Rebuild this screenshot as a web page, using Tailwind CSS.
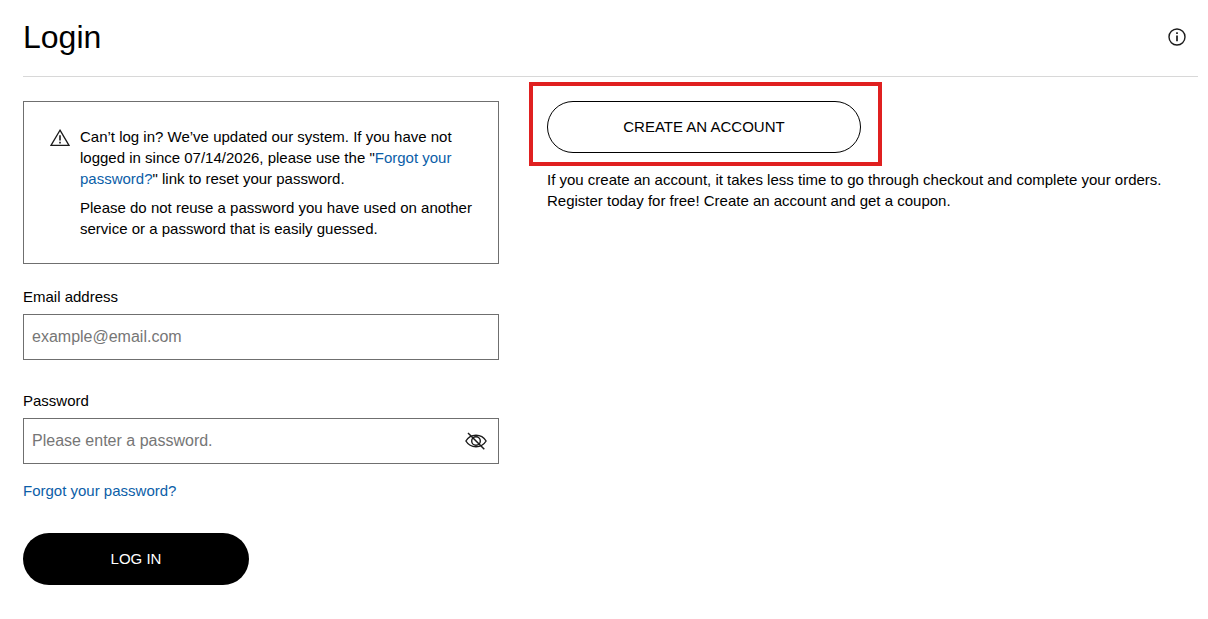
<!DOCTYPE html>
<html lang="en">
<head>
<meta charset="utf-8">
<meta name="viewport" content="width=device-width, initial-scale=1">
<title>Login</title>
<script src="https://cdn.jsdelivr.net/npm/@tailwindcss/browser@4"></script>
</head>
<body class="bg-white font-['Liberation_Sans',Arial,sans-serif] text-[15px] leading-[21px] text-black">
<main class="pr-[10px] pb-8 pl-[23px]">
  <header class="flex items-center justify-between border-b border-[#d8d8d8] pt-[17px] pr-[11px] pb-[19px]">
    <h1 class="text-[32px] leading-10">Login</h1>
    <button type="button" aria-label="Information">
      <svg class="size-5" viewBox="0 0 20 20" fill="none" stroke="#1b1b1b" stroke-width="1.4">
        <circle cx="10" cy="10" r="8"/>
        <path d="M10 8.5V14.2M10 5.2V7" stroke-width="1.7"/>
      </svg>
    </button>
  </header>

  <div class="flex flex-col gap-12 pt-6 md:flex-row">
    <form class="w-full md:w-[41%] md:max-w-[476px] md:shrink-0">
      <section class="flex gap-[10px] border border-[#6f6f6f] p-6 pl-[26px]">
        <svg class="mt-[2px] h-5 w-5 flex-none" viewBox="0 0 20 20" fill="none" stroke="#1b1b1b" stroke-width="1.3">
          <path d="M10 2.2L19 17.4H1Z"/>
          <path d="M10 7.3V12.6M10 13.8V15.4" stroke-width="1.6"/>
        </svg>
        <div class="flex flex-col gap-2">
          <p>Can’t log in? We’ve updated our system. If you have not logged in since 07/14/2026, please use the "<a href="#" class="text-[#0b5ea8]">Forgot your password?</a>" link to reset your password.</p>
          <p>Please do not reuse a password you have used on another service or a password that is easily guessed.</p>
        </div>
      </section>

      <label for="email" class="mt-[22px] block">Email address</label>
      <input id="email" type="email" placeholder="example@email.com" class="mt-[7px] block h-[46px] w-full border border-[#6f6f6f] px-2 text-base placeholder:text-[#767676]">

      <label for="password" class="mt-[30px] block">Password</label>
      <div class="mt-[7px] flex h-[46px] items-center border border-[#6f6f6f] pr-[10px]">
        <input id="password" type="password" placeholder="Please enter a password." class="h-full min-w-0 grow px-2 text-base placeholder:text-[#767676]">
        <button type="button" aria-label="Show password">
          <svg class="size-6" viewBox="0 0 24 24" fill="none" stroke="#1b1b1b" stroke-width="1.4">
            <path d="M1.9 12C4.2 8.2 7.8 6.3 12 6.3S19.8 8.2 22.1 12C19.8 15.8 16.2 17.7 12 17.7S4.2 15.8 1.9 12Z"/>
            <circle cx="12" cy="12" r="4.3"/>
            <path d="M4 4L20.3 20.2" stroke-width="1.5"/>
          </svg>
        </button>
      </div>

      <a href="#" class="mt-4 block w-fit text-[#0b5ea8]">Forgot your password?</a>
      <button type="submit" class="mt-8 block h-[52px] w-full max-w-[226px] rounded-full bg-black pb-[2px] text-white">LOG IN</button>
    </form>

    <section class="min-w-0 grow">
      <div class="relative w-full max-w-[314px]">
        <button type="button" class="block h-[52px] w-full rounded-full border border-black pb-[2px]">CREATE AN ACCOUNT</button>
        <div class="pointer-events-none absolute -top-[19px] -right-[21px] -bottom-[13px] -left-[18px] border-4 border-[#e02020]"></div>
      </div>
      <p class="mt-4">If you create an account, it takes less time to go through checkout and complete your orders. Register today for free! Create an account and get a coupon.</p>
    </section>
  </div>
</main>
</body>
</html>
